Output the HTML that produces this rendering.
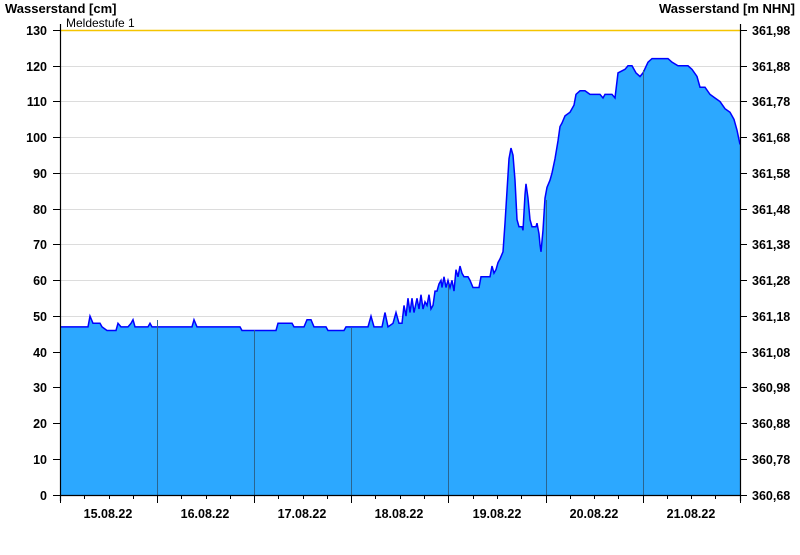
<!DOCTYPE html>
<html><head><style>
body{margin:0;background:#fff;width:800px;height:550px;overflow:hidden}
svg text{font-family:"Liberation Sans",Arial,sans-serif}
</style></head><body>
<svg width="800" height="550" viewBox="0 0 800 550" xmlns="http://www.w3.org/2000/svg">
<g stroke="#dcdcdc" stroke-width="1">
<line x1="60" x2="740" y1="459.5" y2="459.5"/><line x1="60" x2="740" y1="423.5" y2="423.5"/>
<line x1="60" x2="740" y1="387.5" y2="387.5"/><line x1="60" x2="740" y1="352.5" y2="352.5"/>
<line x1="60" x2="740" y1="316.5" y2="316.5"/><line x1="60" x2="740" y1="280.5" y2="280.5"/>
<line x1="60" x2="740" y1="244.5" y2="244.5"/><line x1="60" x2="740" y1="209.5" y2="209.5"/>
<line x1="60" x2="740" y1="173.5" y2="173.5"/><line x1="60" x2="740" y1="137.5" y2="137.5"/>
<line x1="60" x2="740" y1="101.5" y2="101.5"/><line x1="60" x2="740" y1="66.5" y2="66.5"/>
</g>
<line x1="60" x2="740" y1="30.5" y2="30.5" stroke="#f5c400" stroke-width="1.5"/>
<g transform="translate(0,495) scale(1,-3.577)">
<polygon fill="#2ca8ff" points="60,0 60,47 88,47 90,50 93,48 100,48 102,47 107,46 116,46 118,48 121,47 128,47 131,48 133,49 135,47 148,47 150,48 152,47 192,47 194,49 197,47 240,47 242,46 276,46 278,48 292,48 294,47 304,47 307,49 311,49 314,47 326,47 328,46 344,46 346,47 368,47 371,50 374,47 382,47 385,51 388,47 393,48 396,51 399,48 402,48 404,53 406,50 408,55 410,51 412,55 414,51 417,55 419,52 421,56 423,52 425,54 427,53 429,56 431,52 433,53 435,57 437,57 439,59 441,60 442,58 444,61 446,58 448,60 450,58 452,60 454,57 456,63 458,61 460,64 462,62 464,61 468,61 470,60 473,58 479,58 481,61 490,61 492,64 494,62 496,63 498,65 500,66 503,68 505,76 507,85 509,94 511,97 513,95 515,88 517,77 519,75 522,75 523,74 525,84 526,87 528,83 530,77 532,75 536,75 537,76 539,73 540,70 541,68 543,74 545,83 547,86 550,88 552,90 555,94 558,99 560,103 562,104 565,106 570,107 574,109 576,112 580,113 585,113 590,112 600,112 603,111 605,112 612,112 615,111 618,118 625,119 628,120 632,120 636,118 640,117 643,118 648,121 652,122 668,122 672,121 678,120 688,120 692,119 697,117 700,114 705,114 710,112 715,111 720,110 725,108 730,107 734,105 737,102 740,98 740,0"/>
<polyline fill="none" stroke="#0000ff" stroke-width="1.5" vector-effect="non-scaling-stroke" points="60,47 88,47 90,50 93,48 100,48 102,47 107,46 116,46 118,48 121,47 128,47 131,48 133,49 135,47 148,47 150,48 152,47 192,47 194,49 197,47 240,47 242,46 276,46 278,48 292,48 294,47 304,47 307,49 311,49 314,47 326,47 328,46 344,46 346,47 368,47 371,50 374,47 382,47 385,51 388,47 393,48 396,51 399,48 402,48 404,53 406,50 408,55 410,51 412,55 414,51 417,55 419,52 421,56 423,52 425,54 427,53 429,56 431,52 433,53 435,57 437,57 439,59 441,60 442,58 444,61 446,58 448,60 450,58 452,60 454,57 456,63 458,61 460,64 462,62 464,61 468,61 470,60 473,58 479,58 481,61 490,61 492,64 494,62 496,63 498,65 500,66 503,68 505,76 507,85 509,94 511,97 513,95 515,88 517,77 519,75 522,75 523,74 525,84 526,87 528,83 530,77 532,75 536,75 537,76 539,73 540,70 541,68 543,74 545,83 547,86 550,88 552,90 555,94 558,99 560,103 562,104 565,106 570,107 574,109 576,112 580,113 585,113 590,112 600,112 603,111 605,112 612,112 615,111 618,118 625,119 628,120 632,120 636,118 640,117 643,118 648,121 652,122 668,122 672,121 678,120 688,120 692,119 697,117 700,114 705,114 710,112 715,111 720,110 725,108 730,107 734,105 737,102 740,98"/>
</g>
<g stroke="#2a6590" stroke-width="1">
<line x1="157.5" x2="157.5" y1="320" y2="495"/><line x1="254.5" x2="254.5" y1="330" y2="495"/>
<line x1="351.5" x2="351.5" y1="328" y2="495"/><line x1="448.5" x2="448.5" y1="285" y2="495"/>
<line x1="546.5" x2="546.5" y1="200" y2="495"/><line x1="643.5" x2="643.5" y1="70" y2="495"/>
</g>
<g stroke="#000" stroke-width="1.2">
<line x1="60.5" x2="60.5" y1="24" y2="501"/><line x1="740.5" x2="740.5" y1="24" y2="501"/>
<line x1="60" x2="740" y1="495.5" y2="495.5"/>
</g>
<g stroke="#000" stroke-width="1">
<path d="M53 30.5H60M53 66.5H60M53 101.5H60M53 137.5H60M53 173.5H60M53 209.5H60M53 244.5H60M53 280.5H60M53 316.5H60M53 352.5H60M53 387.5H60M53 423.5H60M53 459.5H60M53 495.5H60"/>
<path d="M741 30.5H747M741 66.5H747M741 101.5H747M741 137.5H747M741 173.5H747M741 209.5H747M741 244.5H747M741 280.5H747M741 316.5H747M741 352.5H747M741 387.5H747M741 423.5H747M741 459.5H747M741 495.5H747"/>
<path d="M60.5 495V503M157.5 495V503M254.5 495V503M351.5 495V503M448.5 495V503M546.5 495V503M643.5 495V503M740.5 495V503"/>
<path d="M84.5 495V499M109.5 495V499M133.5 495V499M181.5 495V499M206.5 495V499M230.5 495V499M278.5 495V499M303.5 495V499M327.5 495V499M375.5 495V499M400.5 495V499M424.5 495V499M473.5 495V499M497.5 495V499M521.5 495V499M570.5 495V499M594.5 495V499M618.5 495V499M667.5 495V499M691.5 495V499M715.5 495V499"/>
</g>
<g font-size="13" font-weight="bold" fill="#000">
<text x="5" y="13">Wasserstand [cm]</text>
<text x="795" y="13" text-anchor="end">Wasserstand [m NHN]</text>
</g>
<text x="66" y="27" font-size="12" fill="#000">Meldestufe 1</text>
<g font-size="12.5" font-weight="bold" fill="#000" text-anchor="end">
<text x="47" y="35">130</text><text x="47" y="71">120</text><text x="47" y="106">110</text>
<text x="47" y="142">100</text><text x="47" y="178">90</text><text x="47" y="214">80</text>
<text x="47" y="249">70</text><text x="47" y="285">60</text><text x="47" y="321">50</text>
<text x="47" y="357">40</text><text x="47" y="392">30</text><text x="47" y="428">20</text>
<text x="47" y="464">10</text><text x="47" y="500">0</text>
</g>
<g font-size="12.5" font-weight="bold" fill="#000">
<text x="752" y="35">361,98</text><text x="752" y="71">361,88</text><text x="752" y="106">361,78</text>
<text x="752" y="142">361,68</text><text x="752" y="178">361,58</text><text x="752" y="214">361,48</text>
<text x="752" y="249">361,38</text><text x="752" y="285">361,28</text><text x="752" y="321">361,18</text>
<text x="752" y="357">361,08</text><text x="752" y="392">360,98</text><text x="752" y="428">360,88</text>
<text x="752" y="464">360,78</text><text x="752" y="500">360,68</text>
</g>
<g font-size="12.5" font-weight="bold" fill="#000" text-anchor="middle">
<text x="108" y="518">15.08.22</text><text x="205" y="518">16.08.22</text><text x="302" y="518">17.08.22</text>
<text x="399" y="518">18.08.22</text><text x="497" y="518">19.08.22</text><text x="594" y="518">20.08.22</text>
<text x="691" y="518">21.08.22</text>
</g>
</svg>
</body></html>
